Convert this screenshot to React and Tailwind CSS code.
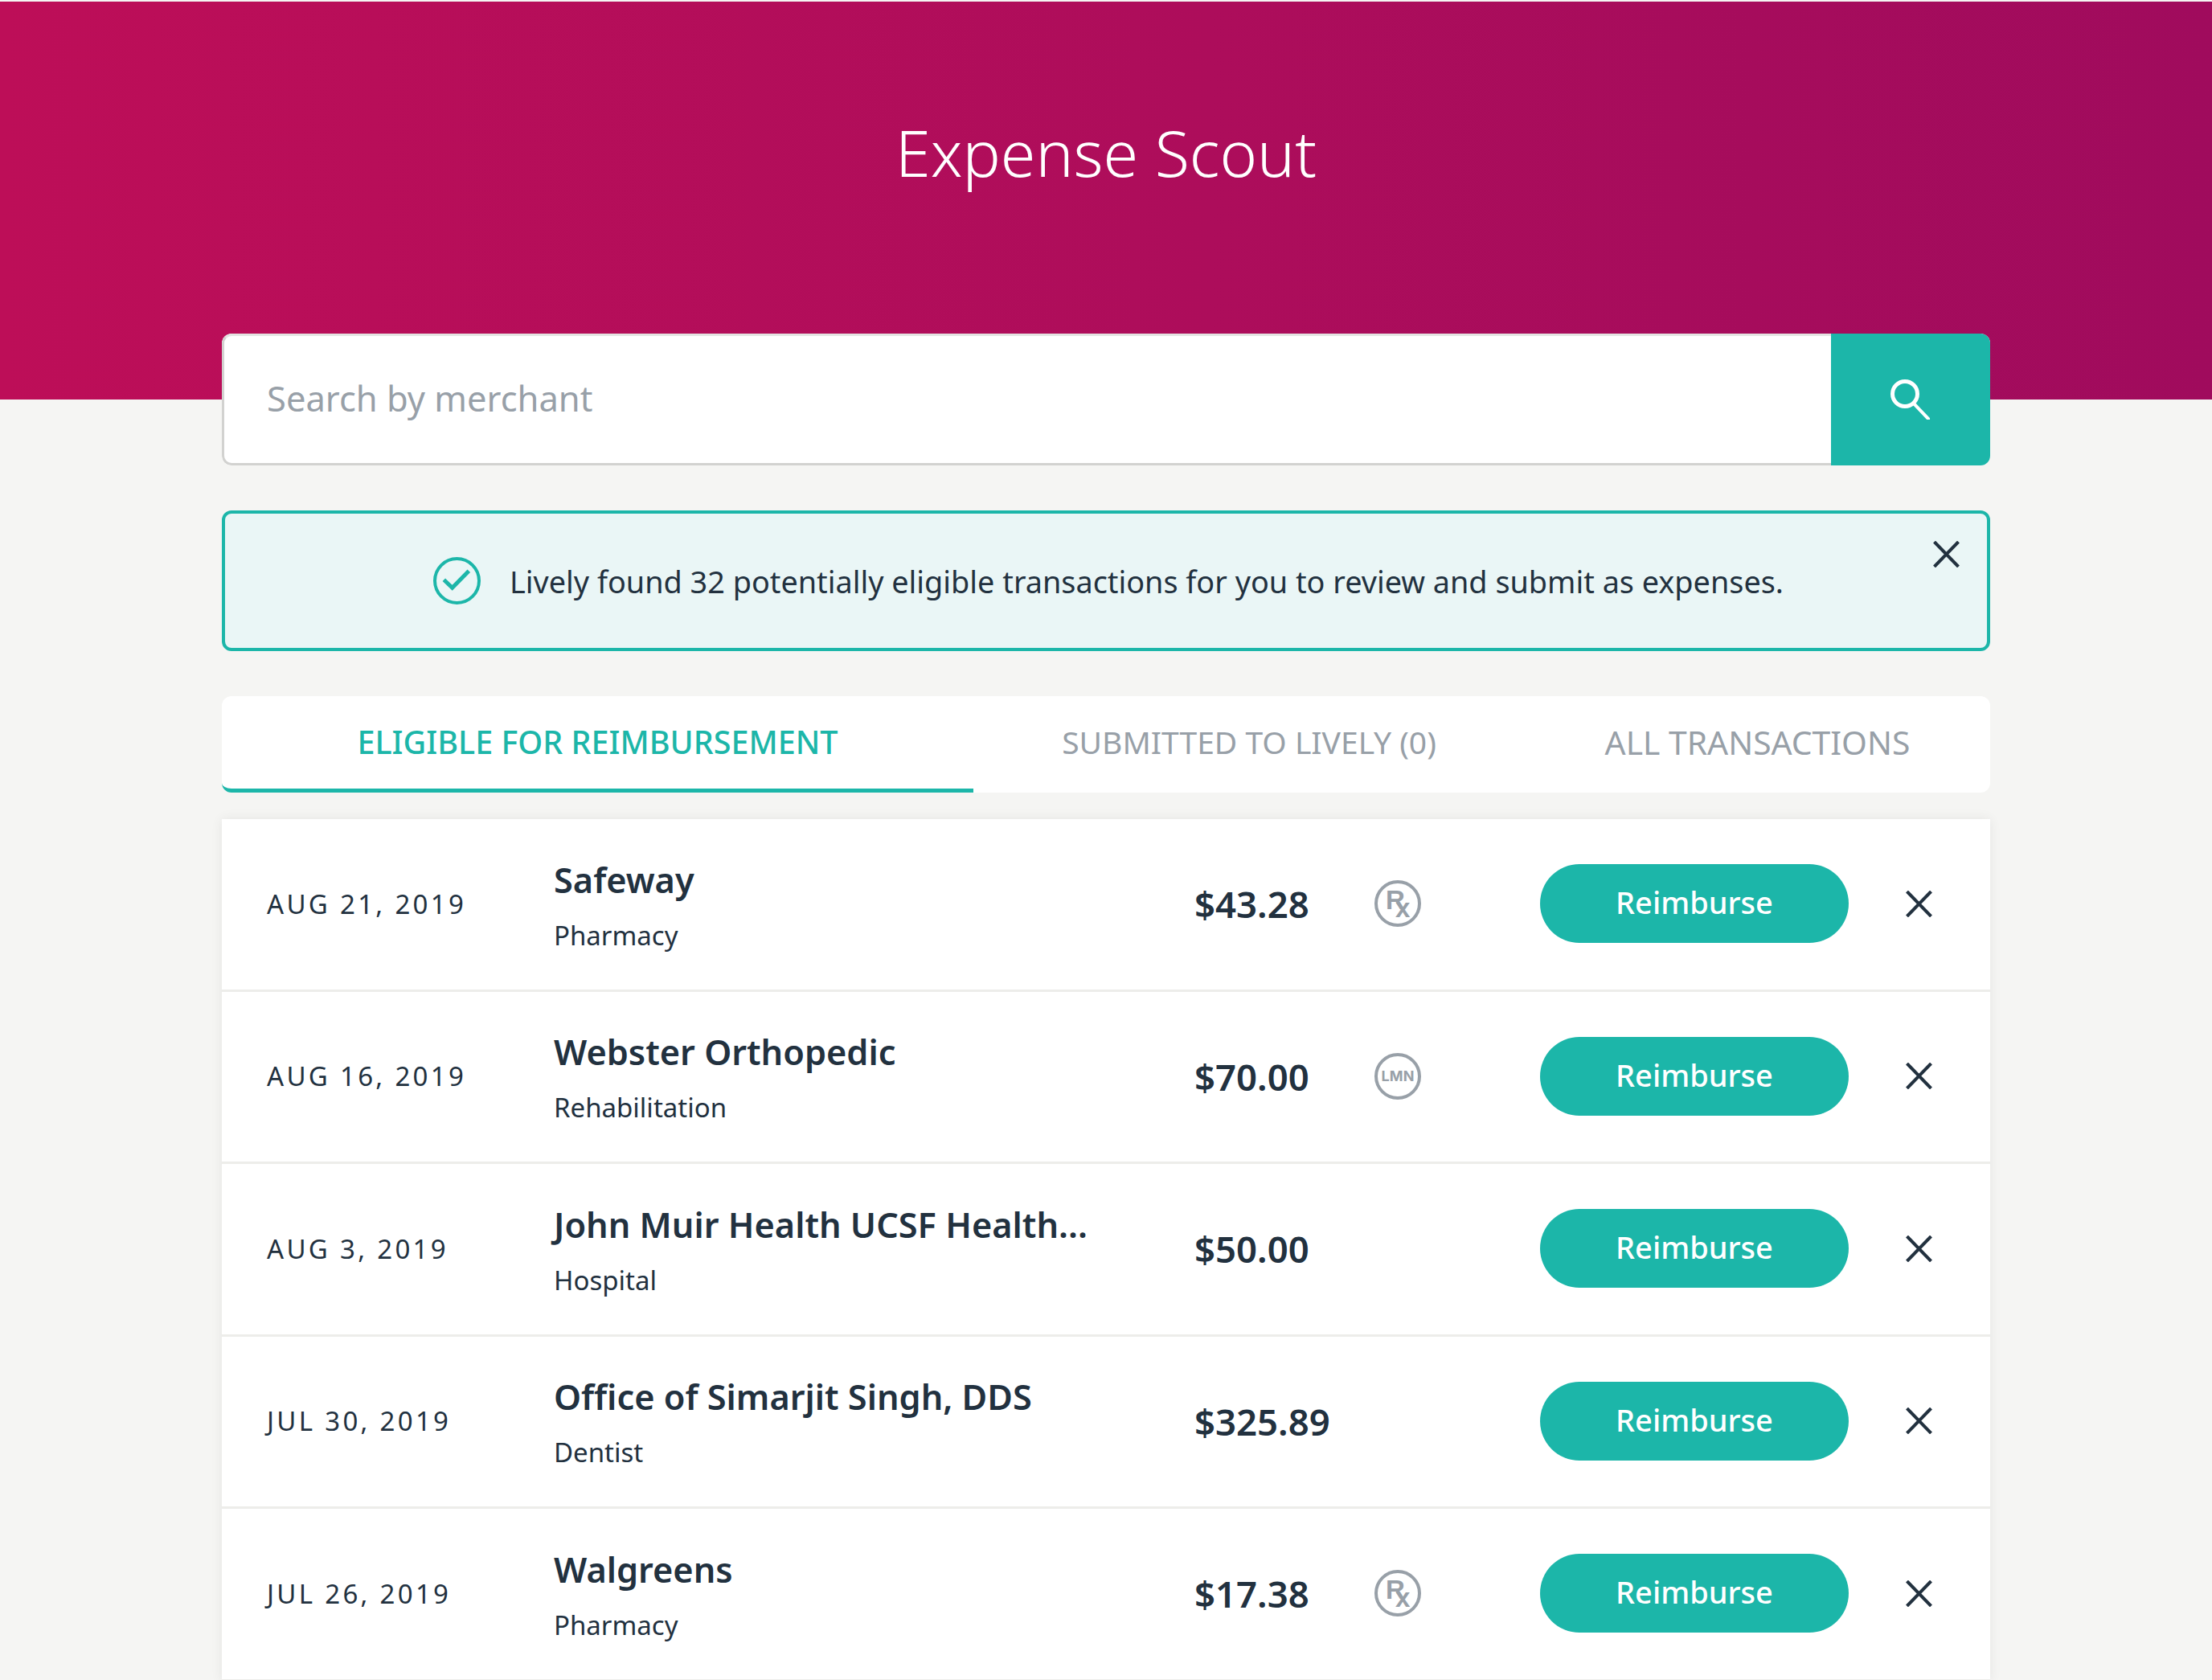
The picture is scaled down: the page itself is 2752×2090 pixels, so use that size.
const transactions = [
  { date: "AUG 21, 2019", name: "Safeway", category: "Pharmacy", amount: "$43.28", badge: "rx" },
  { date: "AUG 16, 2019", name: "Webster Orthopedic", category: "Rehabilitation", amount: "$70.00", badge: "lmn" },
  { date: "AUG 3, 2019", name: "John Muir Health UCSF Health...", category: "Hospital", amount: "$50.00" },
  { date: "JUL 30, 2019", name: "Office of Simarjit Singh, DDS", category: "Dentist", amount: "$325.89" },
  { date: "JUL 26, 2019", name: "Walgreens", category: "Pharmacy", amount: "$17.38", badge: "rx" },
];

const CloseIcon = () => (
  <svg viewBox="0 0 33 33" className="w-[33px] h-[33px]" fill="none" stroke="#22313f" strokeWidth="4">
    <path d="M1.5 1 L31.5 32 M31.5 1 L1.5 32" />
  </svg>
);

const Badge = ({ type }) => {
  if (!type) return null;
  if (type === "rx") {
    return (
      <svg viewBox="0 0 58 58" className="w-[58px] h-[58px]">
        <circle cx="29" cy="29" r="27" fill="none" stroke="#98a0a8" strokeWidth="4" />
        <text
          x="14 26"
          y="36 46"
          fontSize="33"
          fill="#98a0a8"
          className="font-['Liberation_Sans',sans-serif] font-bold"
        >
          Rx
        </text>
      </svg>
    );
  }
  return (
    <div className="w-[58px] h-[58px] rounded-full border-[4px] border-[#98a0a8] flex items-center justify-center text-[#98a0a8]">
      <span className="text-[18px] font-bold font-['Inter',sans-serif] tracking-[0.01em] leading-none">LMN</span>
    </div>
  );
};

const Row = ({ item }) => (
  <div className="h-[214.5px] border-b-[3px] border-[#ededea] flex items-center pl-[56px] pb-[1px]">
    <div className="w-[357px] text-[33px] tracking-[0.1em] font-normal">{item.date}</div>
    <div className="w-[797px] pt-[5px]">
      <div className="text-[43.3px] leading-[60px] font-semibold">{item.name}</div>
      <div className="text-[33px] leading-[50px] mt-[14px]">{item.category}</div>
    </div>
    <div className="w-[224px] text-[45.5px] font-semibold">{item.amount}</div>
    <div className="w-[58px] h-[58px]">
      <Badge type={item.badge} />
    </div>
    <button className="ml-[148px] w-[384px] h-[98px] rounded-full bg-[#1cb6a9] text-white text-[38px] font-medium pb-[3px]">
      Reimburse
    </button>
    <div className="ml-[71px]">
      <CloseIcon />
    </div>
  </div>
);

export default function App() {
  return (
    <div className="min-h-[2090px] bg-[#f5f5f3] text-[#22313f] font-['Noto_Sans',sans-serif] overflow-hidden">
      {/* Header */}
      <div className="mt-[2px] h-[495px] bg-linear-to-r from-[#bd0e58] to-[#a00b5d] text-center pt-[132px]">
        <h1 className="text-white text-[79px] leading-[112px] font-light">Expense Scout</h1>
      </div>

      <div className="w-[2200px] ml-[276px] -mt-[82px] relative">
        {/* Search */}
        <div className="h-[164px] flex rounded-[12px] overflow-hidden bg-white">
          <div className="flex-1 flex items-center pl-[53px] pb-[2px] border-[3px] border-r-0 border-[#d2d2d0] border-t-[#e4e4e2] rounded-l-[12px] text-[43.5px] text-[#98a0a8]">
            Search by merchant
          </div>
          <div className="w-[198px] bg-[#1cb6a9] flex items-center justify-center">
            <svg viewBox="0 0 50 50" className="w-[50px] h-[50px]" fill="none" stroke="white">
              <circle cx="18" cy="18" r="15.5" strokeWidth="5" />
              <path d="M29 30 L47 49" strokeWidth="4" strokeLinecap="round" />
            </svg>
          </div>
        </div>

        {/* Banner */}
        <div className="relative mt-[56px] h-[175px] rounded-[12px] border-[4px] border-[#1cb6a9] bg-[#eaf6f6] flex items-center pl-[259px] gap-[36px]">
          <svg viewBox="0 0 59 59" className="w-[59px] h-[59px]" fill="none" stroke="#1cb6a9">
            <circle cx="29.5" cy="29.5" r="27.5" strokeWidth="4" />
            <path d="M13.3 28.3 L23.7 38.3 L44.3 17.3" strokeWidth="5" />
          </svg>
          <span className="text-[37.8px] leading-[50px] pt-[2px]">
            Lively found 32 potentially eligible transactions for you to review and submit as expenses.
          </span>
          <div className="absolute right-[34px] top-[34px]">
            <CloseIcon />
          </div>
        </div>

        {/* Tabs */}
        <div className="mt-[56px] h-[120px] flex rounded-[12px] bg-white">
          <div className="w-[935px] flex items-center justify-center border-b-[5px] border-[#1cb6a9] rounded-bl-[12px] text-[#1cb6a9] text-[39.5px] font-medium">
            ELIGIBLE FOR REIMBURSEMENT
          </div>
          <div className="w-[686px] flex items-center justify-center text-[#98a0a8] text-[39px] pb-[5px]">
            SUBMITTED TO LIVELY (0)
          </div>
          <div className="flex-1 flex items-center justify-center text-[#98a0a8] text-[40.8px] pb-[5px]">
            ALL TRANSACTIONS
          </div>
        </div>

        {/* Transactions */}
        <div className="mt-[33px] bg-white shadow-[0_0_14px_rgba(0,0,0,0.07)]">
          {transactions.map((item) => (
            <Row key={item.date} item={item} />
          ))}
        </div>
      </div>
    </div>
  );
}
